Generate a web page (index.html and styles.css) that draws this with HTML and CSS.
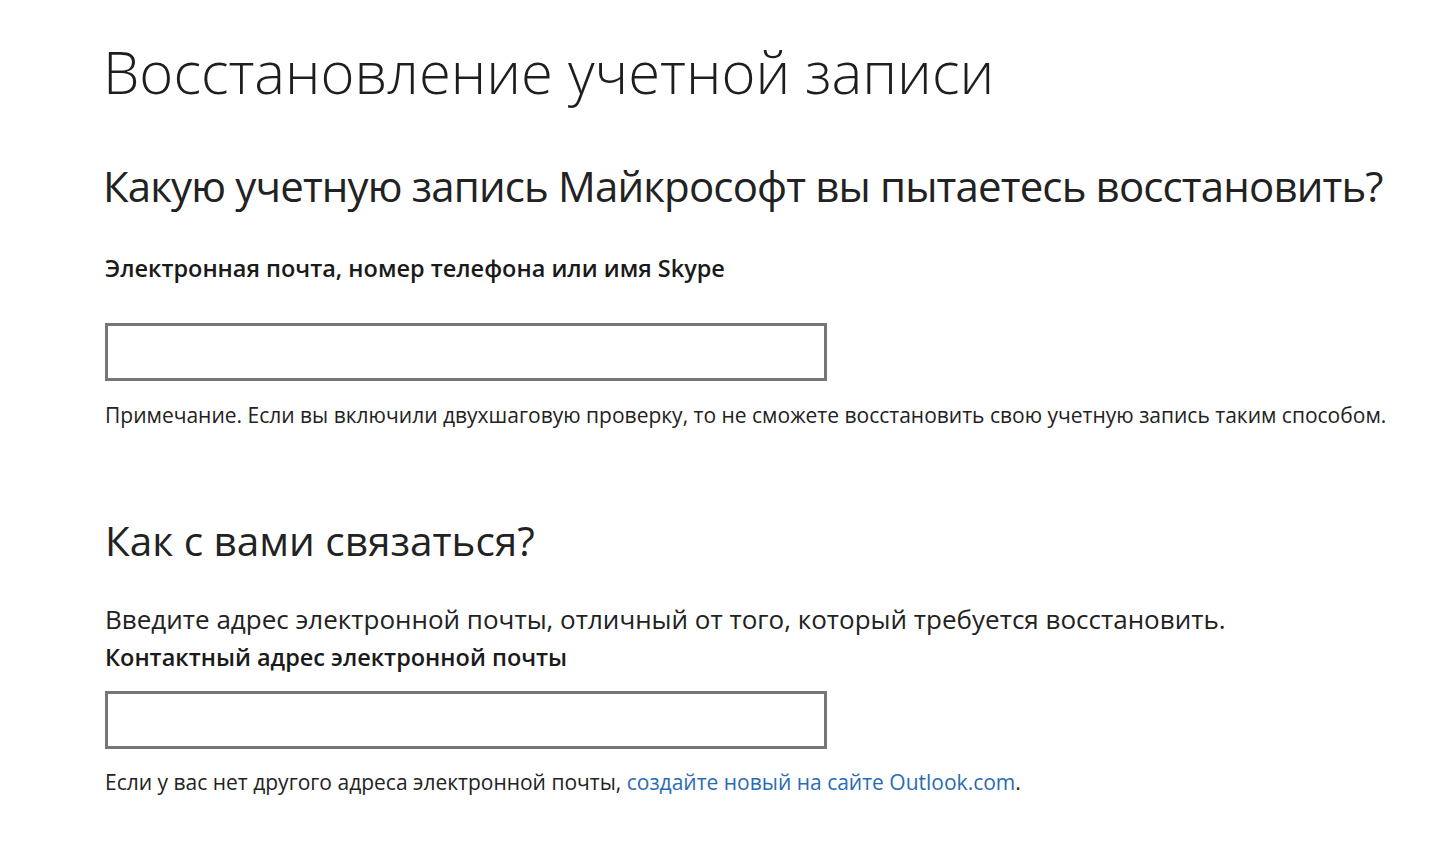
FILE: index.html
```html
<!DOCTYPE html>
<html lang="ru">
<head>
<meta charset="utf-8">
<title>Восстановление учетной записи</title>
<link rel="stylesheet" href="styles.css">
</head>
<body>
<main class="page">
  <h1 class="title">Восстановление учетной записи</h1>
  <section class="section">
    <h2 class="subtitle">Какую учетную запись Майкрософт вы пытаетесь восстановить?</h2>
    <label class="label" for="acc">Электронная почта, номер телефона или имя Skype</label>
    <input class="field" id="acc" type="text">
    <p class="note">Примечание. Если вы включили двухшаговую проверку, то не сможете восстановить свою учетную запись таким способом.</p>
  </section>
  <section class="section contact">
    <h2 class="heading">Как с вами связаться?</h2>
    <p class="text">Введите адрес электронной почты, отличный от того, который требуется восстановить.</p>
    <label class="label label-tight" for="mail">Контактный адрес электронной почты</label>
    <input class="field" id="mail" type="text">
    <p class="note">Если у вас нет другого адреса электронной почты, <a class="link" href="#">создайте новый на сайте Outlook.com</a>.</p>
  </section>
</main>
</body>
</html>
```

FILE: styles.css
```css
html, body {
  margin: 0;
  padding: 0;
  background: #ffffff;
}
body {
  font-family: "Open Sans", "Noto Sans", sans-serif;
  color: #1b1b1b;
}
.page {
  padding: 27px 0 0 103px;
  display: flex;
  flex-direction: column;
}
.title {
  margin: 0;
  font-weight: 300;
  font-size: 58px;
  line-height: 90px;
  color: #1e1e1e;
  white-space: nowrap;
}
.section {
  display: flex;
  flex-direction: column;
  align-items: flex-start;
}
.subtitle {
  margin: 41px 0 0 0;
  font-weight: 400;
  font-size: 42px;
  letter-spacing: -0.85px;
  line-height: 56px;
  color: #222;
  white-space: nowrap;
}
.label {
  margin-top: 39px;
  margin-left: 2px;
  font-weight: 600;
  font-size: 23.5px;
  line-height: 30px;
  color: #1a1a1a;
  white-space: nowrap;
}
.field {
  margin: 40px 0 0 2px;
  box-sizing: border-box;
  width: 722px;
  height: 58px;
  border: 3px solid #767676;
  border-radius: 0;
  background: #fff;
  outline: none;
}
.note {
  margin: 20px 0 0 2px;
  font-size: 21px;
  line-height: 28px;
  color: #222;
  white-space: nowrap;
}
.contact .heading {
  margin: 85px 0 0 2px;
  font-weight: 400;
  font-size: 40.5px;
  line-height: 54px;
  color: #222;
  white-space: nowrap;
}
.text {
  margin: 34px 0 0 2px;
  font-size: 26px;
  line-height: 34px;
  color: #222;
  white-space: nowrap;
}
.contact .label-tight {
  margin-top: 6px;
}
.contact .field {
  margin-top: 19px;
}
.contact .note {
  margin-top: 19px;
}
.link {
  color: #2a6cb3;
  text-decoration: none;
}
```
